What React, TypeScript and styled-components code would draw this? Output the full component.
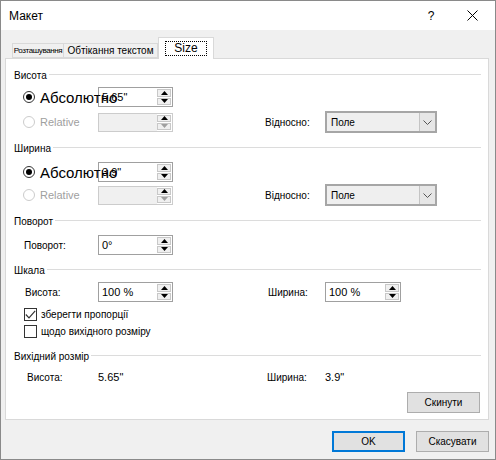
import React from 'react';
import styled, { createGlobalStyle } from 'styled-components';

const Global = createGlobalStyle`
  html, body { margin: 0; padding: 0; background: #f0f0f0; }
  body { font-family: "Liberation Sans", Arial, sans-serif; color: #000; }
  * { box-sizing: border-box; }
`;

const Window = styled.div`
  width: 496px;
  height: 460px;
  border: 1px solid #8a8a8a;
  background: #f0f0f0;
  display: flex;
  flex-direction: column;
`;

const TitleBar = styled.div`
  height: 29px;
  background: #fff;
  display: flex;
  align-items: center;
  padding-left: 8px;
  font-size: 12px;
`;

const Title = styled.div`
  flex: 1;
`;

const TitleBtn = styled.div<{ $w: number }>`
  width: ${p => p.$w}px;
  display: flex;
  justify-content: center;
  align-items: center;
  font-size: 12px;
`;

const Body = styled.div`
  flex: 1;
  padding: 7px 6px 0 4px;
  display: flex;
  flex-direction: column;
`;

const TabStrip = styled.div`
  height: 21px;
  display: flex;
  align-items: flex-end;
  padding-left: 7px;
  position: relative;
  z-index: 1;
`;

const Tab = styled.div<{ $w: number; $active?: boolean; $first?: boolean; $size: number; $ls?: number }>`
  width: ${p => p.$w}px;
  height: ${p => (p.$active ? 22 : 15)}px;
  margin-bottom: ${p => (p.$active ? -1 : 0)}px;
  background: ${p => (p.$active ? '#fff' : '#f0f0f0')};
  border: 1px solid #d9d9d9;
  border-bottom: ${p => (p.$active ? 'none' : '1px solid #d9d9d9')};
  border-left: ${p => (p.$first || p.$active ? '1px solid #d9d9d9' : 'none')};
  font-size: ${p => p.$size}px;
  letter-spacing: ${p => p.$ls ?? 0}px;
  display: flex;
  align-items: center;
  justify-content: center;
  white-space: nowrap;
`;

const Focus = styled.span`
  border: 1px dotted #000;
  padding: 0 8px;
  line-height: 13px;
`;

const Panel = styled.div`
  height: 362px;
  background: #fff;
  border: 1px solid #d9d9d9;
  padding: 9px 7px 0 8px;
  display: flex;
  flex-direction: column;
`;

const Header = styled.div<{ $top: number }>`
  margin-top: ${p => p.$top}px;
  height: 14px;
  display: flex;
  align-items: center;
  font-size: 10px;
  &::after {
    content: '';
    flex: 1;
    height: 1px;
    background: #dcdcdc;
    margin-left: 2px;
    margin-top: -2px;
  }
`;

const Row = styled.div<{ $top: number; $h: number }>`
  margin-top: ${p => p.$top}px;
  height: ${p => p.$h}px;
  display: grid;
  grid-template-columns: 84px 75px 92px 60px 112px;
  align-items: center;
`;

const Label = styled.div<{ $indent?: number }>`
  padding-left: ${p => p.$indent ?? 0}px;
  font-size: 10px;
  white-space: nowrap;
`;

const RadioLabel = styled.label<{ $disabled?: boolean }>`
  padding-left: 9px;
  display: flex;
  align-items: center;
  gap: 5px;
  white-space: nowrap;
  font-size: ${p => (p.$disabled ? 11 : 15)}px;
  color: ${p => (p.$disabled ? '#a0a0a0' : '#000')};
  position: relative;
  z-index: 1;
`;

const Radio = styled.span<{ $on?: boolean; $disabled?: boolean }>`
  width: 12px;
  height: 12px;
  flex: none;
  border-radius: 50%;
  border: 1px solid ${p => (p.$disabled ? '#cccccc' : '#333')};
  display: flex;
  align-items: center;
  justify-content: center;
  &::after {
    content: '';
    width: 6px;
    height: 6px;
    border-radius: 50%;
    background: ${p => (p.$on ? '#000' : 'transparent')};
  }
`;

const Field = styled.div<{ $disabled?: boolean; $w?: number }>`
  width: ${p => p.$w ?? 75}px;
  height: ${p => (p.$disabled ? 19 : 20)}px;
  border: 1px solid ${p => (p.$disabled ? '#cccccc' : '#a0a0a0')};
  background: ${p => (p.$disabled ? '#f0f0f0' : '#fff')};
  display: flex;
`;

const Value = styled.div`
  flex: 1;
  font-size: 11px;
  padding-left: 3px;
  display: flex;
  align-items: center;
`;

const Spin = styled.div`
  width: 15px;
  display: flex;
  flex-direction: column;
  gap: 1px;
  padding: 1px 1px 1px 0;
  background: #fff;
`;

const SpinBtn = styled.div`
  flex: 1;
  background: #f0f0f0;
  border: 1px solid #c8c8c8;
  display: flex;
  align-items: center;
  justify-content: center;
`;

const Select = styled.div`
  width: 112px;
  height: 22px;
  border: 2px solid #a6a6a6;
  background: #efefef;
  display: flex;
  font-size: 10px;
`;

const SelectText = styled.div`
  flex: 1;
  padding-left: 4px;
  display: flex;
  align-items: center;
`;

const SelectBtn = styled.div`
  width: 16px;
  border-left: 1px solid #c4c4c4;
  background: #e6e6e6;
  display: flex;
  align-items: center;
  justify-content: center;
`;

const CheckRow = styled.label<{ $top: number }>`
  margin-top: ${p => p.$top}px;
  height: 14px;
  padding-left: 10px;
  display: flex;
  align-items: center;
  gap: 4px;
  font-size: 10px;
`;

const Box = styled.span`
  width: 13px;
  height: 13px;
  border: 1px solid #333;
  display: flex;
  align-items: center;
  justify-content: center;
`;

const Static = styled.div`
  font-size: 11px;
`;

const ButtonRow = styled.div<{ $top: number }>`
  margin-top: ${p => p.$top}px;
  display: flex;
  justify-content: flex-end;
  gap: 11px;
  padding-right: 1px;
`;

const Button = styled.div<{ $primary?: boolean }>`
  width: 73px;
  height: 21px;
  background: #e1e1e1;
  border: ${p => (p.$primary ? '2px solid #0078d7' : '1px solid #adadad')};
  font-size: 10px;
  display: flex;
  align-items: center;
  justify-content: center;
`;

const Footer = styled(ButtonRow)`
  padding-right: 0;
`;

const Arrow = ({ up, dim }: { up?: boolean; dim?: boolean }) => (
  <svg width="7" height="4" viewBox="0 0 7 4">
    <path d={up ? 'M0 4 L3.5 0 L7 4 Z' : 'M0 0 L3.5 4 L7 0 Z'} fill={dim ? '#a0a0a0' : '#000'} />
  </svg>
);

const Spinner = ({ dim }: { dim?: boolean }) => (
  <Spin>
    <SpinBtn><Arrow up /></SpinBtn>
    <SpinBtn><Arrow dim={dim} /></SpinBtn>
  </Spin>
);

const NumField = ({ value, disabled, w }: { value?: string; disabled?: boolean; w?: number }) => (
  <Field $disabled={disabled} $w={w}>
    <Value>{value}</Value>
    <Spinner dim={disabled} />
  </Field>
);

const Dropdown = ({ text }: { text: string }) => (
  <Select>
    <SelectText>{text}</SelectText>
    <SelectBtn>
      <svg width="9" height="5" viewBox="0 0 9 5">
        <path d="M0.5 0.5 L4.5 4.5 L8.5 0.5" stroke="#555" fill="none" strokeWidth="1" />
      </svg>
    </SelectBtn>
  </Select>
);

const SizeBlock = ({ title, value, top, gap }: { title: string; value: string; top: number; gap: number[] }) => (
  <>
    <Header $top={top}>{title}</Header>
    <Row $top={gap[0]} $h={20}>
      <RadioLabel><Radio $on />Абсолютно</RadioLabel>
      <NumField value={value} />
    </Row>
    <Row $top={gap[1]} $h={22}>
      <RadioLabel $disabled><Radio $disabled />Relative</RadioLabel>
      <NumField disabled />
      <span />
      <Label>Відносно:</Label>
      <Dropdown text="Поле" />
    </Row>
  </>
);

export default function App() {
  return (
    <>
      <Global />
      <Window>
        <TitleBar>
          <Title>Макет</Title>
          <TitleBtn $w={36}>?</TitleBtn>
          <TitleBtn $w={46}>
            <svg width="11" height="11" viewBox="0 0 11 11">
              <path d="M0.5 0.5 L10.5 10.5 M10.5 0.5 L0.5 10.5" stroke="#000" strokeWidth="1" />
            </svg>
          </TitleBtn>
        </TitleBar>
        <Body>
          <TabStrip>
            <Tab $w={52} $size={8} $ls={-0.4} $first>Розташування</Tab>
            <Tab $w={94} $size={10}>Обтікання текстом</Tab>
            <Tab $w={56} $size={12} $active><Focus>Size</Focus></Tab>
          </TabStrip>
          <Panel>
            <SizeBlock title="Висота" value={'5.65"'} top={0} gap={[5, 4]} />
            <SizeBlock title="Ширина" value={'3.9"'} top={8} gap={[7, 2]} />

            <Header $top={8}>Поворот</Header>
            <Row $top={7} $h={20}>
              <Label $indent={10}>Поворот:</Label>
              <NumField value="0°" />
            </Row>

            <Header $top={8}>Шкала</Header>
            <Row $top={5} $h={20}>
              <Label $indent={11}>Висота:</Label>
              <NumField value="100 %" />
              <span />
              <Label $indent={3}>Ширина:</Label>
              <NumField value="100 %" w={76} />
            </Row>
            <CheckRow $top={5}>
              <Box>
                <svg width="11" height="9" viewBox="0 0 11 9">
                  <path d="M0.8 4.5 L4 7.8 L10.2 0.8" stroke="#333" fill="none" strokeWidth="1.2" />
                </svg>
              </Box>
              зберегти пропорції
            </CheckRow>
            <CheckRow $top={3}>
              <Box />
              щодо вихідного розміру
            </CheckRow>

            <Header $top={11}>Вихідний розмір</Header>
            <Row $top={6} $h={16}>
              <Label $indent={13}>Висота:</Label>
              <Static>5.65"</Static>
              <span />
              <Label $indent={2}>Ширина:</Label>
              <Static>3.9"</Static>
            </Row>
            <ButtonRow $top={7}>
              <Button>Скинути</Button>
            </ButtonRow>
          </Panel>
          <Footer $top={11}>
            <Button $primary>OK</Button>
            <Button>Скасувати</Button>
          </Footer>
        </Body>
      </Window>
    </>
  );
}
